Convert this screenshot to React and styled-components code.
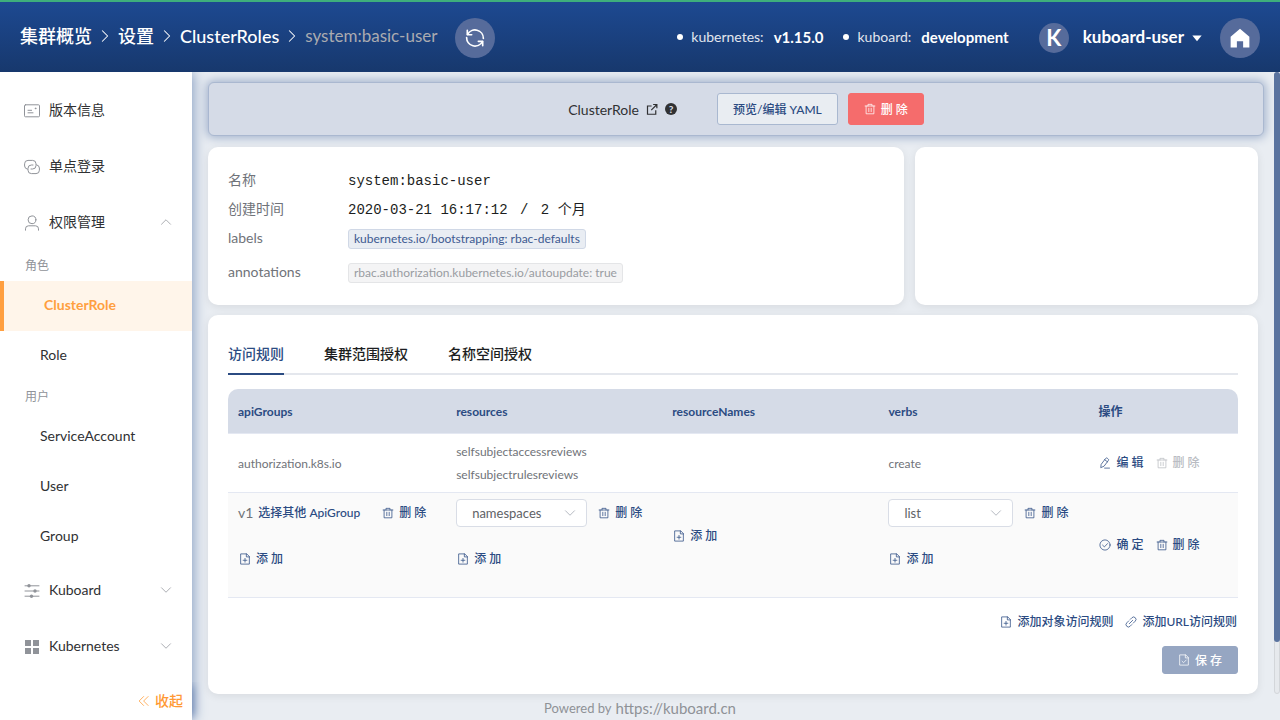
import React, { useState } from 'react';
import styled, { createGlobalStyle, css } from 'styled-components';

const GlobalStyle = createGlobalStyle`
  * {
    box-sizing: border-box;
  }

  body {
    margin: 0;
    background: #e9edf2;
    color: #303133;
    font-family: Lato, 'Noto Sans CJK SC', sans-serif;
    font-size: 14px;
  }

  button,
  select {
    font-family: inherit;
  }

  a {
    color: inherit;
    text-decoration: none;
  }
`;

/* ---------- icons ---------- */

const Svg = styled.svg`
  flex: none;
  display: block;
  width: ${(p) => p.$size || 12}px;
  height: ${(p) => p.$size || 12}px;
  fill: none;
  stroke: currentColor;
  stroke-width: ${(p) => p.$stroke || 1};
  stroke-linecap: round;
  stroke-linejoin: round;
`;

const shapes = {
  trash: (
    <>
      <path d="M1.5 4h13M5.3 4V1.8h5.4V4M2.8 4v10.4h10.4V4" />
      <path d="M6.4 7v4.5M9.6 7v4.5" />
    </>
  ),
  add: (
    <>
      <path d="M9.8 1.2H2.2v13.6h11.6V5.2zM9.8 1.2v4h4" />
      <path d="M8 7.2v5M5.5 9.7h5" />
    </>
  ),
  checkDoc: (
    <>
      <path d="M9.8 1.2H2.2v13.6h11.6V5.2zM9.8 1.2v4h4" />
      <path d="M5.4 9.6l2 2 3.6-3.6" />
    </>
  ),
  edit: (
    <path d="M3.2 9.4L8.8 2a1.6 1.6 0 0 1 2.3-.3l1 .8a1.6 1.6 0 0 1 .3 2.3L6.8 12.2l-4 1.8zM7.6 3.6l3.6 2.8M7.5 14.8H14" />
  ),
  check: (
    <>
      <circle cx="8" cy="8" r="6.8" />
      <path d="M4.8 8.2l2.4 2.3 4.2-4.4" />
    </>
  ),
  link: (
    <path d="M7 4.5l2.2-2.2a3.1 3.1 0 0 1 4.5 4.5L11 9.5M9 11.5l-2.2 2.2a3.1 3.1 0 0 1-4.5-4.5L5 6.5M5.8 10.2l4.4-4.4" />
  ),
  external: (
    <path
      d="M7.5 4H2v11h11V9.5M9.5 2h5v5M14.5 2L7 9.5"
      strokeLinecap="butt"
      strokeLinejoin="miter"
    />
  ),
  refresh: (
    <>
      <path d="M2.6 5.4A6.1 6.1 0 0 1 14.1 8.3M13.4 10.6A6.1 6.1 0 0 1 1.9 7.7" />
      <path d="M2.4 2.4v3.2h3.2M13.6 13.6v-3.2h-3.2" />
    </>
  ),
  right: <path d="M5 2l6 6-6 6" />,
  up: <path d="M2 11l6-6 6 6" />,
  down: <path d="M2 5l6 6 6-6" />,
  collapse: <path d="M7.5 2l-6 6 6 6M13.5 2l-6 6 6 6" />,
  postcard: (
    <>
      <rect x="0.5" y="1.8" width="15" height="12" rx="1" />
      <path d="M4 7.3h3.6M4 9.8h5M11.4 5.2h0.8v0.5h-0.8z" />
    </>
  ),
  connection: (
    <>
      <path d="M3.4 10.2A3.4 3.4 0 0 1 .6 7V4.8a3.4 3.4 0 0 1 3.4-3.4h4.6A3.4 3.4 0 0 1 12 4.8v1.8A3.4 3.4 0 0 1 8.6 10H7" />
      <path d="M12.6 5.8a3.4 3.4 0 0 1 2.8 3.2v2.2a3.4 3.4 0 0 1-3.4 3.4H7.4A3.4 3.4 0 0 1 4 11.2V9.4A3.4 3.4 0 0 1 7.4 6H9" />
    </>
  ),
  user: (
    <>
      <circle cx="8" cy="4.8" r="3.9" />
      <path d="M1.5 15.2v-1.4a3 3 0 0 1 3-3h7a3 3 0 0 1 3 3v1.4" />
    </>
  ),
  operation: (
    <>
      <path d="M1 2.8h14M1 8h14M1 13.2h14" />
      <g fill="currentColor" stroke="none">
        <circle cx="5" cy="2.8" r="1.7" />
        <circle cx="11" cy="8" r="1.7" />
        <circle cx="7.5" cy="13.2" r="1.7" />
      </g>
    </>
  ),
  menu: (
    <path
      d="M1 1h6v6H1zM9 1h6v6H9zM1 9h6v6H1zM9 9h6v6H9z"
      fill="currentColor"
      stroke="none"
    />
  ),
  home: <path d="M8 0.5L0.5 7v8.5h5v-5h5v5h5V7z" fill="currentColor" stroke="none" />,
  caret: <path d="M0.5 4h15L8 13z" fill="currentColor" stroke="none" />,
};

function Icon({ name, size, stroke }) {
  return (
    <Svg viewBox="0 0 16 16" $size={size} $stroke={stroke} aria-hidden="true">
      {shapes[name]}
    </Svg>
  );
}

/* ---------- shell ---------- */

const Page = styled.div`
  display: flex;
  flex-direction: column;
  min-height: 100vh;
`;

const Header = styled.header`
  display: flex;
  align-items: center;
  justify-content: space-between;
  height: 72px;
  padding: 2px 20px 0;
  border-top: 2px solid #3eaf7c;
  background: linear-gradient(#1d4991, #17386d);
  color: #fff;
`;

const HeaderSide = styled.div`
  display: flex;
  align-items: center;
  gap: 18px;
`;

const Breadcrumb = styled.nav`
  display: flex;
  align-items: center;
  gap: 6px;
  padding-bottom: 4px;
  font-size: 18px;
  line-height: 24px;
  font-weight: 500;
`;

const Current = styled.span`
  color: #aaabb0;
  font-size: 17px;
  font-weight: 400;
`;

const Round = styled.button`
  display: flex;
  align-items: center;
  justify-content: center;
  width: 40px;
  height: 40px;
  padding: 0;
  border: 0;
  border-radius: 50%;
  background: #566b9b;
  color: #fff;
`;

const Version = styled.span`
  display: flex;
  align-items: center;
  margin-right: 2px;
  padding-bottom: 2px;
  color: #e2e6ee;
  font-size: 14px;
  line-height: 20px;

  &::before {
    content: '';
    width: 6px;
    height: 6px;
    margin-right: 8px;
    border-radius: 50%;
    background: #fff;
  }

  b {
    margin-left: 10px;
    color: #fff;
    font-size: 15px;
  }
`;

const Account = styled.button`
  display: flex;
  align-items: center;
  gap: 8px;
  margin-left: 10px;
  padding: 0;
  border: 0;
  background: none;
  color: #fff;
  font-size: 17px;
  font-weight: 700;
  line-height: 24px;
`;

const AccountName = styled.span`
  padding-bottom: 3px;
`;

const Avatar = styled.span`
  width: 30px;
  height: 30px;
  margin-right: 6px;
  border-radius: 50%;
  background: #566b9b;
  font-size: 22px;
  line-height: 29px;
  text-align: center;
`;

const Body = styled.div`
  display: flex;
  flex: 1;
`;

const Sidebar = styled.aside`
  z-index: 1;
  display: flex;
  flex: none;
  flex-direction: column;
  width: 192px;
  padding-top: 10px;
  background: #fff;
  box-shadow: 2px 0 12px #8ba1c4;
  clip-path: inset(0 -20px 0 0);
`;

const MenuItem = styled.a`
  display: flex;
  align-items: center;
  height: 56px;
  padding: 0 20px 0 24px;
  font-size: 14px;

  > svg {
    color: #909399;
  }

  > svg:first-child {
    margin-top: 2px;
  }

  span {
    flex: 1;
    margin-left: 9px;
    padding-bottom: 2px;
  }
`;

const GroupTitle = styled.div`
  padding-left: 25px;
  color: #909399;
  font-size: 12px;
  line-height: 31px;
`;

const SubItem = styled.a`
  display: block;
  padding: 0 0 2px 40px;
  font-size: 14px;
  line-height: 48px;

  ${(p) =>
    p.$active &&
    css`
      border-left: 4px solid #ff9f40;
      background: #fff5ea;
      color: #ff9f40;
      font-weight: 700;
    `}
`;

const Collapse = styled.button`
  display: flex;
  align-items: center;
  justify-content: flex-end;
  gap: 5px;
  height: 38px;
  margin-top: auto;
  padding: 0 9px;
  border: 0;
  background: #fff;
  color: #ff9933;
  font-size: 14px;
  font-weight: 500;
  line-height: 20px;
  box-shadow: 5px 0 8px -4px #6f88b4;
  clip-path: inset(0 -12px 0 0);
`;

const Main = styled.main`
  display: flex;
  flex: 1;
  flex-direction: column;
  min-width: 0;
`;

const Scroll = styled.div`
  display: flex;
`;

const Content = styled.div`
  flex: 1;
  min-width: 0;
  padding: 10px 16px 0;
`;

const Track = styled.div`
  width: 6px;
  border: 1px solid #d3d6da;
  border-radius: 3px;
  background: #e6e9ed;
`;

const Thumb = styled.div`
  height: 92%;
  margin: -1px;
  border-radius: 3px;
  background: #5a739f;
`;

const Footer = styled.footer`
  display: flex;
  align-items: center;
  justify-content: center;
  gap: 4px;
  padding: 4px 192px 2px 0;
  color: #8f9297;
  font-size: 13px;
  line-height: 20px;

  a {
    font-size: 15px;
  }
`;

/* ---------- content ---------- */

const ActionBar = styled.div`
  display: flex;
  align-items: center;
  justify-content: center;
  gap: 10px;
  margin-right: -6px;
  padding: 10px 0 10px 20px;
  border: 1px solid #aab8d0;
  border-radius: 6px;
  background: #d5dbe7;
  box-shadow: 0 0 10px 2px #a3b3cd;
`;

const Kind = styled.h1`
  display: flex;
  align-items: center;
  gap: 7px;
  margin: 0 30px 0 0;
  font-size: 14px;
  font-weight: 400;
`;

const Help = styled.span`
  width: 12px;
  height: 12px;
  border-radius: 50%;
  background: #303133;
  color: #d5dbe7;
  font-size: 10px;
  font-weight: 900;
  line-height: 12px;
  text-align: center;
`;

const Button = styled.button`
  display: flex;
  align-items: center;
  gap: 5px;
  height: ${(p) => (p.$small ? 28 : 32)}px;
  padding: 0 15px 2px;
  border: 1px solid #a9b8d0;
  border-radius: 3px;
  background: #e9edf2;
  color: #2b4b82;
  font-size: 12px;
  font-weight: 500;

  svg {
    margin-top: 2px;
  }

  ${(p) =>
    p.$danger &&
    css`
      border-color: #f56c6c;
      background: #f56c6c;
      color: #fff;
    `}

  &:disabled {
    border-color: #96a6c2;
    background: #96a6c2;
    color: #fff;
  }
`;

const Card = styled.section`
  padding: ${(p) => (p.$info ? '19px 20px' : '20px')};
  border-radius: 10px;
  background: #fff;
  box-shadow: 0 2px 8px rgba(0, 0, 0, 0.08);
`;

const Panels = styled.div`
  display: grid;
  grid-template-columns: 67fr 33fr;
  gap: 11px;
  margin: 11px 0 10px;
`;

const Info = styled.dl`
  display: grid;
  grid-template-columns: 120px 1fr;
  grid-template-rows: 29px 29px 34px 28px;
  margin: 0;
  line-height: 28px;

  dt {
    color: #707379;
  }

  dd {
    margin: 0;
    color: #1c1e21;
    font-family: 'Liberation Mono', 'Noto Sans CJK SC', monospace;
    line-height: 30px;
  }
`;

const Slash = styled.span`
  margin: 0 4px;
`;

const TagRow = styled.dd`
  padding-top: 5px;
`;

const Tag = styled.span`
  display: block;
  width: fit-content;
  padding: 0 5px;
  border: 1px solid ${(p) => (p.$muted ? '#e4e5e7' : '#d0d8e6')};
  border-radius: 3px;
  background: ${(p) => (p.$muted ? '#f4f4f5' : '#e9edf3')};
  color: ${(p) => (p.$muted ? '#999ca2' : '#3d5a91')};
  font-family: Lato, sans-serif;
  font-size: 12px;
  line-height: 18px;
`;

const Tabs = styled.div`
  display: flex;
  gap: 40px;
  margin-bottom: 14px;
  border-bottom: 2px solid #e4e7ed;
`;

const Tab = styled.button`
  height: 40px;
  margin-bottom: -2px;
  padding: 0 0 2px;
  border: 0;
  border-bottom: 2px solid ${(p) => (p.$active ? '#2b4b82' : 'transparent')};
  background: none;
  color: ${(p) => (p.$active ? '#2b4b82' : '#1c1e21')};
  font-size: 14px;
  font-weight: 500;
`;

const Table = styled.table`
  width: 100%;
  border-spacing: 0;
  table-layout: fixed;
  color: #707379;
  font-size: 12px;
  line-height: 23px;

  th {
    height: 45px;
    padding: 0 10px;
    border-bottom: 1px solid #e4e8f2;
    background: #d5dbe7;
    color: #2b4b82;
    font-weight: 700;
    text-align: left;
  }

  th:first-child {
    border-top-left-radius: 10px;
  }

  th:last-child {
    border-top-right-radius: 10px;
  }

  td {
    padding: 6px 10px;
    border-bottom: 1px solid #e4e8f2;
    white-space: nowrap;
  }
`;

const EditRow = styled.tr`
  background: #fafafa;
`;

const Line = styled.div`
  display: flex;
  align-items: center;
  height: 28px;
  margin-bottom: 18px;
`;

const Actions = styled.div`
  display: flex;
  gap: 10px;
  justify-content: ${(p) => (p.$end ? 'flex-end' : 'flex-start')};
`;

const TextButton = styled.button`
  display: flex;
  align-items: center;
  gap: 5px;
  margin-left: ${(p) => p.$gap || 0}px;
  padding: 0 1px;
  border: 0;
  background: none;
  color: #2b4b82;
  font-size: 12px;
  font-weight: 500;
  line-height: 20px;

  &:disabled {
    color: #b9bcc2;
  }
`;

const ApiVersion = styled.span`
  font-size: 14px;
  line-height: 20px;
`;

const SelectBox = styled.label`
  position: relative;
  width: ${(p) => p.$width}px;
  color: #b4b8c0;

  select {
    display: block;
    width: 100%;
    height: 28px;
    padding: 0 30px 0 15px;
    border: 1px solid #d9dde6;
    border-radius: 4px;
    background: #fff;
    color: #606266;
    font-size: 13px;
    appearance: none;
  }

  svg {
    position: absolute;
    top: 8px;
    right: 11px;
    pointer-events: none;
  }
`;

const LinkRow = styled.div`
  margin: 14px 0;
`;

const Save = styled.div`
  display: flex;
  justify-content: flex-end;
`;

function Picker({ label, width, value }) {
  return (
    <SelectBox $width={width}>
      <select aria-label={label} defaultValue={value}>
        <option>{value}</option>
      </select>
      <Icon name="down" stroke={1.3} />
    </SelectBox>
  );
}

function IconButton({ icon, children, ...rest }) {
  return (
    <TextButton type="button" {...rest}>
      <Icon name={icon} />
      {children}
    </TextButton>
  );
}

const AddLine = () => (
  <Line>
    <IconButton icon="add">添 加</IconButton>
  </Line>
);

function TopBar() {
  return (
    <Header>
      <HeaderSide>
        <Breadcrumb aria-label="breadcrumb">
          <a href="#overview">集群概览</a>
          <Icon name="right" size={14} stroke={1.2} />
          <a href="#settings">设置</a>
          <Icon name="right" size={14} stroke={1.2} />
          <a href="#clusterroles">ClusterRoles</a>
          <Icon name="right" size={14} stroke={1.2} />
          <Current>system:basic-user</Current>
        </Breadcrumb>
        <Round aria-label="刷新">
          <Icon name="refresh" size={22} stroke={1.2} />
        </Round>
      </HeaderSide>
      <HeaderSide>
        <Version>
          kubernetes: <b>v1.15.0</b>
        </Version>
        <Version>
          kuboard: <b>development</b>
        </Version>
        <Account>
          <Avatar>K</Avatar>
          <AccountName>kuboard-user</AccountName>
          <Icon name="caret" size={10} />
        </Account>
        <Round aria-label="首页">
          <Icon name="home" size={20} />
        </Round>
      </HeaderSide>
    </Header>
  );
}

function Menu() {
  return (
    <Sidebar>
      <MenuItem href="#version">
        <Icon name="postcard" size={16} />
        <span>版本信息</span>
      </MenuItem>
      <MenuItem href="#sso">
        <Icon name="connection" size={16} />
        <span>单点登录</span>
      </MenuItem>
      <MenuItem href="#auth">
        <Icon name="user" size={16} />
        <span>权限管理</span>
        <Icon name="up" />
      </MenuItem>
      <GroupTitle>角色</GroupTitle>
      <SubItem href="#clusterrole" $active>
        ClusterRole
      </SubItem>
      <SubItem href="#role">Role</SubItem>
      <GroupTitle>用户</GroupTitle>
      <SubItem href="#serviceaccount">ServiceAccount</SubItem>
      <SubItem href="#user">User</SubItem>
      <SubItem href="#group">Group</SubItem>
      <MenuItem href="#kuboard">
        <Icon name="operation" size={16} />
        <span>Kuboard</span>
        <Icon name="down" />
      </MenuItem>
      <MenuItem href="#kubernetes">
        <Icon name="menu" size={16} />
        <span>Kubernetes</span>
        <Icon name="down" />
      </MenuItem>
      <Collapse type="button">
        <Icon name="collapse" />
        收起
      </Collapse>
    </Sidebar>
  );
}

function RuleTable() {
  return (
    <Table>
      <colgroup>
        <col style={{ width: '21.6%' }} />
        <col style={{ width: '21.4%' }} />
        <col style={{ width: '21.4%' }} />
        <col style={{ width: '20.8%' }} />
        <col />
      </colgroup>
      <thead>
        <tr>
          <th>apiGroups</th>
          <th>resources</th>
          <th>resourceNames</th>
          <th>verbs</th>
          <th>操作</th>
        </tr>
      </thead>
      <tbody>
        <tr>
          <td>authorization.k8s.io</td>
          <td>
            <div>selfsubjectaccessreviews</div>
            <div>selfsubjectrulesreviews</div>
          </td>
          <td />
          <td>create</td>
          <td>
            <Actions>
              <IconButton icon="edit">编 辑</IconButton>
              <IconButton icon="trash" disabled>
                删 除
              </IconButton>
            </Actions>
          </td>
        </tr>
        <EditRow>
          <td>
            <Line>
              <ApiVersion>v1</ApiVersion>
              <TextButton type="button" $gap={4}>
                选择其他 ApiGroup
              </TextButton>
              <IconButton icon="trash" $gap={20}>
                删 除
              </IconButton>
            </Line>
            <AddLine />
          </td>
          <td>
            <Line>
              <Picker label="resource" width={131} value="namespaces" />
              <IconButton icon="trash" $gap={10}>
                删 除
              </IconButton>
            </Line>
            <AddLine />
          </td>
          <td>
            <AddLine />
          </td>
          <td>
            <Line>
              <Picker label="verb" width={125} value="list" />
              <IconButton icon="trash" $gap={10}>
                删 除
              </IconButton>
            </Line>
            <AddLine />
          </td>
          <td>
            <Actions>
              <IconButton icon="check">确 定</IconButton>
              <IconButton icon="trash">删 除</IconButton>
            </Actions>
          </td>
        </EditRow>
      </tbody>
    </Table>
  );
}

const tabs = ['访问规则', '集群范围授权', '名称空间授权'];

function App() {
  const [tab, setTab] = useState(0);

  return (
    <Page>
      <GlobalStyle />
      <TopBar />
      <Body>
        <Menu />
        <Main>
          <Scroll>
            <Content>
              <ActionBar>
                <Kind>
                  ClusterRole
                  <Icon name="external" stroke={1.6} />
                  <Help>?</Help>
                </Kind>
                <Button type="button">预览/编辑 YAML</Button>
                <Button type="button" $danger>
                  <Icon name="trash" />删 除
                </Button>
              </ActionBar>
              <Panels>
                <Card $info>
                  <Info>
                    <dt>名称</dt>
                    <dd>system:basic-user</dd>
                    <dt>创建时间</dt>
                    <dd>
                      2020-03-21 16:17:12 <Slash>/</Slash> 2 个月
                    </dd>
                    <dt>labels</dt>
                    <TagRow>
                      <Tag>kubernetes.io/bootstrapping: rbac-defaults</Tag>
                    </TagRow>
                    <dt>annotations</dt>
                    <TagRow>
                      <Tag $muted>rbac.authorization.kubernetes.io/autoupdate: true</Tag>
                    </TagRow>
                  </Info>
                </Card>
                <Card />
              </Panels>
              <Card>
                <Tabs role="tablist">
                  {tabs.map((name, i) => (
                    <Tab
                      key={name}
                      type="button"
                      role="tab"
                      aria-selected={tab === i}
                      $active={tab === i}
                      onClick={() => setTab(i)}
                    >
                      {name}
                    </Tab>
                  ))}
                </Tabs>
                <RuleTable />
                <LinkRow>
                  <Actions $end>
                    <IconButton icon="add">添加对象访问规则</IconButton>
                    <IconButton icon="link">添加URL访问规则</IconButton>
                  </Actions>
                </LinkRow>
                <Save>
                  <Button type="button" $small disabled>
                    <Icon name="checkDoc" />保 存
                  </Button>
                </Save>
              </Card>
            </Content>
            <Track>
              <Thumb />
            </Track>
          </Scroll>
          <Footer>
            Powered by <a href="https://kuboard.cn">https://kuboard.cn</a>
          </Footer>
        </Main>
      </Body>
    </Page>
  );
}

export default App;
